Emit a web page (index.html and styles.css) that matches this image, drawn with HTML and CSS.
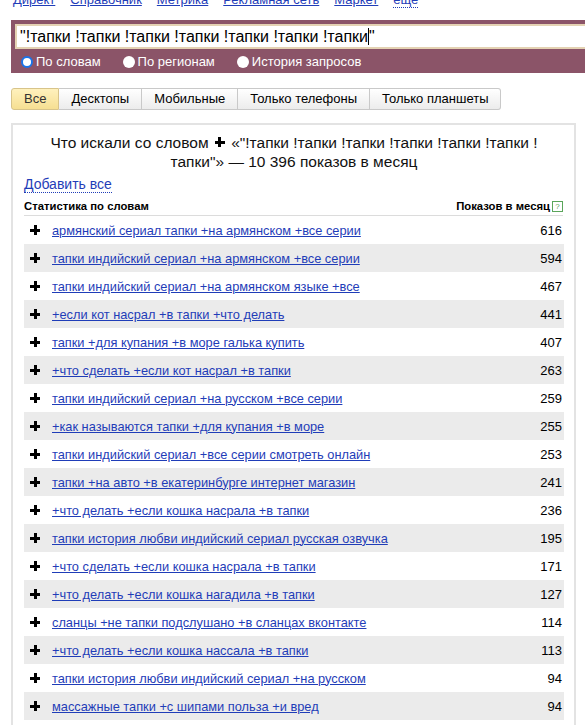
FILE: index.html
```html
<!DOCTYPE html>
<html lang="ru">
<head>
<meta charset="utf-8">
<link rel="stylesheet" href="styles.css">
</head>
<body>
<div class="nav">
  <a href="#">Директ</a>
  <a href="#">Справочник</a>
  <a href="#">Метрика</a>
  <a href="#">Рекламная сеть</a>
  <a href="#">Маркет</a>
  <a href="#" class="more">еще</a>
</div>
<div class="search">
  <div class="input">"!тапки !тапки !тапки !тапки !тапки !тапки !тапки<span class="caret"></span>"</div>
  <div class="radios">
    <label class="radio on"><span class="dot"></span>По словам</label>
    <label class="radio"><span class="dot"></span>По регионам</label>
    <label class="radio"><span class="dot"></span>История запросов</label>
  </div>
</div>
<div class="tabs">
  <span class="tab active">Все</span><span class="tab">Десктопы</span><span class="tab">Мобильные</span><span class="tab">Только телефоны</span><span class="tab">Только планшеты</span>
</div>
<div class="box">
  <div class="title">Что искали со словом <span class="plus big"></span> «"!тапки !тапки !тапки !тапки !тапки !тапки !<br>тапки"» — 10 396 показов в месяц</div>
  <div class="addall"><a href="#">Добавить все</a></div>
  <div class="thead"><span>Статистика по словам</span><span class="right">Показов в месяц<span class="q">?</span></span></div>
  <div class="rows">
    <div class="row"><span class="pcell"><span class="plus"></span></span><a href="#">армянский сериал тапки +на армянском +все серии</a><span class="num">616</span></div>
    <div class="row alt"><span class="pcell"><span class="plus"></span></span><a href="#">тапки индийский сериал +на армянском +все серии</a><span class="num">594</span></div>
    <div class="row"><span class="pcell"><span class="plus"></span></span><a href="#">тапки индийский сериал +на армянском языке +все</a><span class="num">467</span></div>
    <div class="row alt"><span class="pcell"><span class="plus"></span></span><a href="#">+если кот насрал +в тапки +что делать</a><span class="num">441</span></div>
    <div class="row"><span class="pcell"><span class="plus"></span></span><a href="#">тапки +для купания +в море галька купить</a><span class="num">407</span></div>
    <div class="row alt"><span class="pcell"><span class="plus"></span></span><a href="#">+что сделать +если кот насрал +в тапки</a><span class="num">263</span></div>
    <div class="row"><span class="pcell"><span class="plus"></span></span><a href="#">тапки индийский сериал +на русском +все серии</a><span class="num">259</span></div>
    <div class="row alt"><span class="pcell"><span class="plus"></span></span><a href="#">+как называются тапки +для купания +в море</a><span class="num">255</span></div>
    <div class="row"><span class="pcell"><span class="plus"></span></span><a href="#">тапки индийский сериал +все серии смотреть онлайн</a><span class="num">253</span></div>
    <div class="row alt"><span class="pcell"><span class="plus"></span></span><a href="#">тапки +на авто +в екатеринбурге интернет магазин</a><span class="num">241</span></div>
    <div class="row"><span class="pcell"><span class="plus"></span></span><a href="#">+что делать +если кошка насрала +в тапки</a><span class="num">236</span></div>
    <div class="row alt"><span class="pcell"><span class="plus"></span></span><a href="#">тапки история любви индийский сериал русская озвучка</a><span class="num">195</span></div>
    <div class="row"><span class="pcell"><span class="plus"></span></span><a href="#">+что сделать +если кошка насрала +в тапки</a><span class="num">171</span></div>
    <div class="row alt"><span class="pcell"><span class="plus"></span></span><a href="#">+что делать +если кошка нагадила +в тапки</a><span class="num">127</span></div>
    <div class="row"><span class="pcell"><span class="plus"></span></span><a href="#">сланцы +не тапки подслушано +в сланцах вконтакте</a><span class="num">114</span></div>
    <div class="row alt"><span class="pcell"><span class="plus"></span></span><a href="#">+что делать +если кошка нассала +в тапки</a><span class="num">113</span></div>
    <div class="row"><span class="pcell"><span class="plus"></span></span><a href="#">тапки история любви индийский сериал +на русском</a><span class="num">94</span></div>
    <div class="row alt"><span class="pcell"><span class="plus"></span></span><a href="#">массажные тапки +с шипами польза +и вред</a><span class="num">94</span></div>
  </div>
</div>
</body>
</html>
```
FILE: styles.css
```css
html, body {
  margin: 0;
  padding: 0;
  background: #fff;
  font-family: "Liberation Sans", Arial, sans-serif;
  color: #000;
  overflow: hidden;
}
a { color: #1f3db8; }

.nav {
  display: flex;
  gap: 15px;
  padding-left: 13px;
  margin-top: -10px;
  height: 30px;
  line-height: 20px;
  font-size: 13px;
}
.nav a { color: #1f3db8; }
.nav .more { text-decoration: none; border-bottom: 1px dotted #1f3db8; height: 17px; }

.search {
  margin-left: 11px;
  background: #8b5468;
  padding: 4px 0 0 4px;
  height: 49px;
}
.input {
  background: #fff;
  border: 2px solid #e4d2b3;
  border-right: none;
  height: 21px;
  line-height: 22px;
  font-size: 16px;
  padding-left: 3px;
  white-space: nowrap;
}
.caret {
  display: inline-block;
  width: 1px;
  height: 17px;
  background: #000;
  vertical-align: -3px;
}
.radios {
  display: flex;
  padding-left: 6px;
  margin-top: 5px;
  font-size: 13px;
  color: #fff;
  line-height: 16px;
}
.radio { display: flex; align-items: center; gap: 3px; margin-right: 22px; }
.dot {
  width: 12px;
  height: 12px;
  border-radius: 50%;
  background: #fff;
  box-sizing: border-box;
}
.radio.on .dot { border: 2px solid #1a73e8; background: #fff; }

.tabs {
  display: flex;
  margin: 15px 0 0 11px;
  height: 22px;
}
.tab {
  font-size: 13px;
  line-height: 20px;
  padding: 0 12px;
  border: 1px solid #c9c9c9;
  border-left: none;
  background: linear-gradient(#ffffff, #ececec);
  color: #000;
}
.tab:first-child { border-left: 1px solid #c9c9c9; border-radius: 3px 0 0 3px; }
.tab:last-child { border-radius: 0 3px 3px 0; }
.tab.active {
  background: linear-gradient(#fff1bd, #f6df92);
  border-color: #d8c48a;
  color: #333;
}

.box {
  margin: 13px 9px 0 11px;
  border: 2px solid #e3e3e3;
  padding: 8px 10px 0 11px;
  height: 700px;
}
.title {
  text-align: center;
  font-size: 15.5px;
  line-height: 19px;
  color: #111;
}
.plus {
  display: inline-block;
  position: relative;
  width: 10px;
  height: 10px;
}
.plus::before, .plus::after {
  content: "";
  position: absolute;
  background: #000;
}
.plus::before { left: 0; top: 3.5px; width: 10px; height: 3px; }
.plus::after { left: 3.5px; top: 0; width: 3px; height: 10px; }
.plus.big { margin: 0 2px; vertical-align: 1px; }

.addall {
  margin-top: 4px;
  font-size: 14px;
  line-height: 18px;
}
.addall a { text-decoration: none; border-bottom: 1px dotted #1f3db8; }
.thead {
  display: flex;
  justify-content: space-between;
  font-size: 11.3px;
  font-weight: bold;
  line-height: 14px;
  margin-top: 6px;
  padding-bottom: 2px;
  border-bottom: 1px solid #dcdcdc;
  margin-right: 1px;
}
.q {
  display: inline-block;
  width: 9px;
  height: 9px;
  border: 1px solid #5aa55a;
  color: #5aa55a;
  font-size: 8px;
  line-height: 9px;
  text-align: center;
  margin-left: 2px;
  vertical-align: 1px;
  font-weight: normal;
}
.rows { margin-top: 0; }
.row {
  display: flex;
  align-items: center;
  height: 28px;
  font-size: 12.8px;
  padding-right: 2px;
}
.row.alt { background: #ebebeb; }
.pcell {
  width: 22px;
  display: flex;
  justify-content: center;
}
.row a { flex: 1; margin-left: 6px; }
.num { color: #000; font-size: 13px; }
```
